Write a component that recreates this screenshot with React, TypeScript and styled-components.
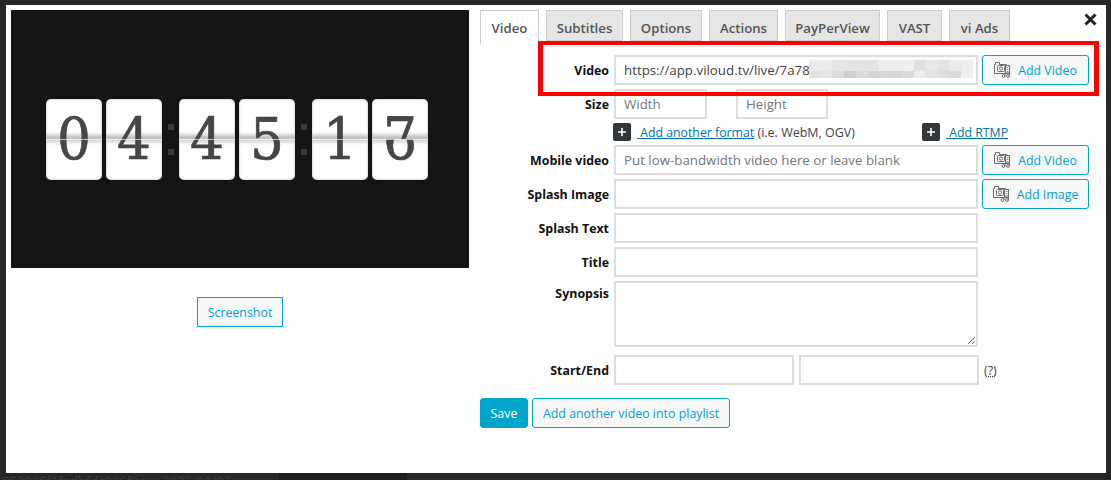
import React from "react";
import styled, { createGlobalStyle } from "styled-components";

const Global = createGlobalStyle`
  html, body { margin: 0; padding: 0; background: #272727; }
  body { font-family: "Open Sans", "Noto Sans", sans-serif; font-size: 13px; color: #444; overflow: hidden; }
  * { box-sizing: border-box; }
`;

const Page = styled.div`
  width: 1111px;
  height: 480px;
  padding: 5px 5px 0 6px;
  overflow: hidden;
`;

const Modal = styled.div`
  position: relative;
  height: 468px;
  background: #fff;
  padding: 5px 5px 0 5px;
  display: flex;
  gap: 11px;
`;

const LeftCol = styled.div`
  width: 458px;
  display: flex;
  flex-direction: column;
  align-items: center;
`;

const Player = styled.div`
  width: 458px;
  height: 258px;
  background: #141414;
  display: flex;
  align-items: center;
  justify-content: center;
  padding: 0 6px 0 0;
  margin-bottom: 29px;
`;

const Clock = styled.div`
  display: flex;
  align-items: center;
`;

const Card = styled.div`
  position: relative;
  width: 56px;
  height: 81px;
  margin-right: 4px;
  border-radius: 5px;
  background: #fff;
  box-shadow: inset 0 0 2px #999;
  overflow: hidden;
  display: flex;
  flex-direction: column;
  &:last-child { margin-right: 0; }
  &::before {
    content: "";
    position: absolute;
    left: 0;
    right: 0;
    top: 33px;
    height: 13px;
    background: linear-gradient(#fff0, #bcbcbc 45%, #cccccc 55%, #fff0);
  }
  &::after {
    content: "";
    position: absolute;
    left: 0;
    right: 0;
    top: 40px;
    height: 1px;
    background: #ffffffa0;
  }
`;

const Half = styled.div`
  position: relative;
  height: 50%;
  overflow: hidden;
  text-align: center;
`;

const Digit = styled.div<{ $bottom?: boolean }>`
  position: relative;
  height: 81px;
  line-height: 81px;
  margin-top: ${({ $bottom }) => ($bottom ? "-40.5px" : "0")};
  text-align: center;
  font-family: "DejaVu Serif", serif;
  font-size: 58px;
  color: #464646;
  -webkit-text-stroke: 0.7px #464646;
  transform: scaleX(0.92);
`;

const Colon = styled.div`
  width: 9px;
  margin-right: 4px;
  height: 31px;
  display: flex;
  flex-direction: column;
  justify-content: space-between;
  align-items: center;
  & > i {
    width: 6px;
    height: 6px;
    background: #3a3a3a;
  }
`;

const Button = styled.button<{ $w?: number }>`
  font-family: inherit;
  font-size: 12.4px;
  height: 30px;
  width: ${({ $w }) => ($w ? `${$w}px` : "auto")};
  border: 1px solid #00a5cc;
  border-radius: 3px;
  background: #f6f7f7;
  color: #00a0d2;
  padding: 0;
  display: flex;
  align-items: center;
  justify-content: center;
  flex: none;
`;

const ShotButton = styled(Button)`
  border-radius: 0;
`;

const SaveButton = styled(Button)`
  background: #00a5cc;
  color: #fff;
`;

const RightCol = styled.div`
  width: 621px;
  display: flex;
  flex-direction: column;
`;

const Tabs = styled.div`
  width: 620px;
  height: 35px;
  display: flex;
  gap: 7px;
  margin-bottom: 10px;
  border-bottom: 1px solid #ddd;
`;

const Tab = styled.div<{ $active?: boolean; $w: number }>`
  width: ${({ $w }) => $w}px;
  height: ${({ $active }) => ($active ? "35px" : "31px")};
  border: 1px solid #ccc;
  border-bottom: ${({ $active }) => ($active ? "1px solid #fff" : "1px solid #ccc")};
  background: ${({ $active }) => ($active ? "#fff" : "#e5e5e5")};
  color: #555;
  font-weight: 600;
  font-size: 13.2px;
  display: flex;
  align-items: center;
  justify-content: center;
  padding-top: ${({ $active }) => ($active ? "0" : "4px")};
`;

const Form = styled.div`
  display: flex;
  flex-direction: column;
  gap: 4px;
`;

const Row = styled.div`
  display: grid;
  grid-template-columns: 129px 364px 106px;
  column-gap: 5px;
  align-items: center;
  & > button { margin-left: -1px; }
`;

const TopRow = styled(Row)`
  align-items: start;
  & > label { padding-top: 4px; }
`;

const RangeRow = styled(Row)`
  margin-top: 4px;
`;

const Label = styled.label`
  text-align: right;
  color: #111;
  font-weight: 700;
  font-size: 12.4px;
`;

const Input = styled.input<{ $w?: number }>`
  width: ${({ $w }) => ($w ? `${$w}px` : "100%")};
  height: 30px;
  border: 2px solid #ddd;
  background: #fff;
  color: #444;
  font-family: inherit;
  font-size: 13.3px;
  padding: 0 8px;
  outline: none;
  flex: none;
  &::placeholder { color: #72777c; opacity: 1; }
`;

const TextArea = styled.textarea`
  width: 100%;
  height: 66px;
  border: 2px solid #ddd;
  background: #fff;
  display: block;
  outline: none;
`;

const UrlField = styled.div`
  position: relative;
  width: 364px;
`;

const Mosaic = styled.div`
  position: absolute;
  left: 195px;
  top: 5px;
  width: 164px;
  height: 18px;
  display: grid;
  grid-template-columns: repeat(14, 1fr);
  grid-template-rows: 11px 7px;
`;

const Tile = styled.span<{ $c: string }>`
  background: ${({ $c }) => $c};
`;

const SizeFields = styled.div`
  display: flex;
  gap: 29px;
`;

const FormatRow = styled.div`
  display: flex;
  align-items: center;
  height: 22px;
  margin: 2px 0 -2px 133px;
  font-size: 12.5px;
  color: #444;
`;

const FormatGroup = styled.div<{ $w: number }>`
  width: ${({ $w }) => $w}px;
  display: flex;
  align-items: center;
`;

const PlusBox = styled.span`
  width: 18px;
  height: 18px;
  background: #32373c;
  border-radius: 2px;
  display: flex;
  align-items: center;
  justify-content: center;
  margin-right: 6px;
`;

const LinkText = styled.a`
  color: #0073aa;
  font-size: 12.3px;
  text-decoration: underline;
  white-space: pre;
`;

const Hint = styled.span`
  color: #444;
  font-size: 12.5px;
  text-decoration: underline dotted;
`;

const RangeFields = styled.div`
  display: flex;
  align-items: center;
  gap: 5px;
  width: 400px;
`;

const Actions = styled.div`
  display: flex;
  gap: 4px;
  margin-top: 13px;
`;

const RedFrame = styled.div`
  position: absolute;
  left: 532px;
  top: 36px;
  width: 561px;
  height: 55px;
  border: 4px solid #f00;
  border-left-width: 5px;
  border-right-width: 5px;
  pointer-events: none;
`;

const CloseIcon = styled.svg`
  position: absolute;
  right: 9px;
  top: 8px;
`;

const BackStrip = styled.div`
  height: 7px;
  display: flex;
  margin-left: -4px;
  color: #3b3b3b;
  font-size: 13px;
  line-height: 17px;
  overflow: hidden;
`;

const Thumb = styled.div`
  width: 128px;
  height: 7px;
  margin-left: 48px;
  background: #1e1e1e;
`;

const StripGroup = styled.span<{ $w: number }>`
  width: ${({ $w }) => $w}px;
  white-space: pre;
`;

const IconSvg = styled.svg`
  margin-right: 8px;
  flex: none;
`;

const MediaIcon = () => (
  <IconSvg width="16" height="16" viewBox="0 0 16 16" fill="none" stroke="#6f6f6f" strokeWidth="1">
    <path d="M.5 11.5v-9h1v-2h4v2h7v9z" />
    <rect x="3.5" y="3.5" width="7" height="6" rx="1" />
    <circle cx="7" cy="6.5" r="1.6" />
    <rect x="11.5" y="3.5" width="4" height="8" fill="#f6f7f7" />
    <path d="M12.5 5.5h2M12.5 7.5h2M12.5 9.5h2" stroke="#999" />
    <circle cx="9.5" cy="14" r="1.4" />
    <circle cx="14" cy="14" r="1.4" />
    <path d="M11 14v-3h4.4v3" />
  </IconSvg>
);

const Plus = () => (
  <PlusBox>
    <svg width="10" height="10" viewBox="0 0 10 10" stroke="#fff" strokeWidth="1.6">
      <path d="M5 1v8M1 5h8" />
    </svg>
  </PlusBox>
);

const TILES = [
  "#ececec", "#ececec", "#e6e6e6", "#e4e4e4", "#e4e4e4", "#e4e4e4", "#eeeeee", "#eeeeee",
  "#eeeeee", "#e0e2e0", "#e8e8e8", "#e0e4e2", "#ebebeb", "#eeeeee",
  "#e2e4e2", "#e6e6e6", "#dddddd", "#cfcfcf", "#dcdcdc", "#d4d4d2", "#d6d8d6", "#d6d6d6",
  "#dcdcdc", "#ececec", "#e2e2e2", "#dde0de", "#dcdcdc", "#eeeeee",
];

const TABS: [string, number][] = [
  ["Video", 59], ["Subtitles", 77], ["Options", 72], ["Actions", 69],
  ["PayPerView", 95], ["VAST", 55], ["vi Ads", 61],
];

const FlipCard = ({ top, bottom }: { top: string; bottom?: string }) => (
  <Card>
    {bottom ? (
      <>
        <Half><Digit>{top}</Digit></Half>
        <Half><Digit $bottom>{bottom}</Digit></Half>
      </>
    ) : (
      <Digit>{top}</Digit>
    )}
  </Card>
);

const Dots = () => (
  <Colon><i /><i /></Colon>
);

export default function App() {
  return (
    <Page>
      <Global />
      <Modal>
        <LeftCol>
          <Player>
            <Clock>
              <FlipCard top="0" />
              <FlipCard top="4" />
              <Dots />
              <FlipCard top="4" />
              <FlipCard top="5" />
              <Dots />
              <FlipCard top="1" />
              <FlipCard top="7" bottom="6" />
            </Clock>
          </Player>
          <ShotButton $w={86}>Screenshot</ShotButton>
        </LeftCol>
        <RightCol>
          <Tabs>
            {TABS.map(([name, w], i) => (
              <Tab key={name} $w={w} $active={i === 0}>{name}</Tab>
            ))}
          </Tabs>
          <Form>
            <Row>
              <Label>Video</Label>
              <UrlField>
                <Input defaultValue="https://app.viloud.tv/live/7a78" />
                <Mosaic>
                  {TILES.map((c, i) => <Tile key={i} $c={c} />)}
                </Mosaic>
              </UrlField>
              <Button><MediaIcon />Add Video</Button>
            </Row>
            <div>
              <Row>
                <Label>Size</Label>
                <SizeFields>
                  <Input $w={93} placeholder="Width" />
                  <Input $w={92} placeholder="Height" />
                </SizeFields>
              </Row>
              <FormatRow>
                <FormatGroup $w={309}>
                  <Plus />
                  <LinkText> Add another format</LinkText>&nbsp;(i.e. WebM, OGV)
                </FormatGroup>
                <FormatGroup $w={120}>
                  <Plus />
                  <LinkText> Add RTMP</LinkText>
                </FormatGroup>
              </FormatRow>
            </div>
            <Row>
              <Label>Mobile video</Label>
              <Input placeholder="Put low-bandwidth video here or leave blank" />
              <Button><MediaIcon />Add Video</Button>
            </Row>
            <Row>
              <Label>Splash Image</Label>
              <Input />
              <Button><MediaIcon />Add Image</Button>
            </Row>
            <Row>
              <Label>Splash Text</Label>
              <Input />
            </Row>
            <Row>
              <Label>Title</Label>
              <Input />
            </Row>
            <TopRow>
              <Label>Synopsis</Label>
              <TextArea />
            </TopRow>
            <RangeRow>
              <Label>Start/End</Label>
              <RangeFields>
                <Input $w={180} />
                <Input $w={180} />
                <Hint>(?)</Hint>
              </RangeFields>
            </RangeRow>
          </Form>
          <Actions>
            <SaveButton $w={48}>Save</SaveButton>
            <Button $w={198}>Add another video into playlist</Button>
          </Actions>
        </RightCol>
        <RedFrame />
        <CloseIcon width="13" height="13" viewBox="0 0 13 13" stroke="#222" strokeWidth="3">
          <path d="M1.5 1.5l10 10M11.5 1.5l-10 10" />
        </CloseIcon>
      </Modal>
      <BackStrip>
        <StripGroup $w={160}>852005f1fadbfdc086f0e</StripGroup>
        <StripGroup $w={69}>2023/02/02</StripGroup>
        <Thumb />
      </BackStrip>
    </Page>
  );
}
